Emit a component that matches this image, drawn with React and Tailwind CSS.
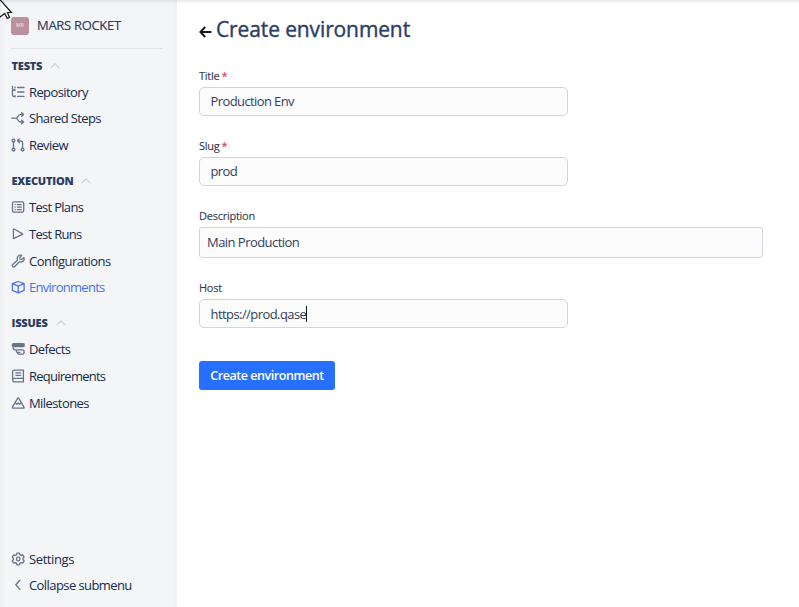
const FONT = "font-['Open_Sans','Noto_Sans',sans-serif]";

function Icon({ children }) {
  return (
    <svg
      width="14"
      height="14"
      viewBox="0 0 14 14"
      fill="none"
      stroke="currentColor"
      strokeWidth="1.3"
      strokeLinecap="round"
      strokeLinejoin="round"
      className="shrink-0"
    >
      {children}
    </svg>
  );
}

const icons = {
  repository: (
    <Icon>
      <path d="M1.5 1.4v8.9a1 1 0 0 0 1 1h1.5M1.5 5h2.5M4 2v.8M6.6 2.5h6.4M6.6 7h6.4M6.6 11.4h6.4M4 4.4v1.2M4 10.7v1.2" />
    </Icon>
  ),
  shared: (
    <Icon>
      <path d="M.8 7.2h4.2M12.4 3.4H9.6C7 3.4 6.6 7.2 5 7.2 6.6 7.2 7 11 9.6 11h2.8M10.6 1.6l2 1.8-2 1.8M10.6 9.2l2 1.8-2 1.8" />
    </Icon>
  ),
  review: (
    <Icon>
      <circle cx="2.5" cy="2.6" r="1.4" />
      <circle cx="2.5" cy="11.6" r="1.4" />
      <circle cx="11.6" cy="11.6" r="1.4" />
      <path d="M2.5 4v6.2M11.6 10.2V5.2c0-1.4-.8-2.4-2.2-2.4H6.6M8.4.9 6.5 2.8l1.9 1.9" />
    </Icon>
  ),
  plans: (
    <Icon>
      <rect x="1.5" y="1.8" width="11.2" height="10.4" rx="1.4" />
      <path d="M4.1 4.6h.2M6.4 4.6h3.9M4.1 7.1h.2M6.4 7.1h3.9M4.1 9.6h.2M6.4 9.6h3.9" />
    </Icon>
  ),
  runs: (
    <Icon>
      <path d="M2.4 2.4v9.2L11.4 7.4a.5.5 0 0 0 0-.8L3 2a.4.4 0 0 0-.6.4z" />
    </Icon>
  ),
  configurations: (
    <Icon>
      <path d="M12.9 3.6 10.8 5.3 9.1 5.1 8.9 3.4 10.7 1.4A3.3 3.3 0 0 0 6.6 6L1.7 10.5a1.3 1.3 0 0 0 2 2L8.4 7.8a3.3 3.3 0 0 0 4.5-4.2z" />
    </Icon>
  ),
  environments: (
    <Icon>
      <path d="M7.2 1.5 13.1 3.6V10.4L7.2 12.9 1.4 10.4V3.6zM1.4 3.6 7.2 6.1l5.9-2.5M7.2 6.1V12.9" />
    </Icon>
  ),
  defects: (
    <Icon>
      <rect x="1.4" y="1.7" width="11.8" height="3" rx="1.1" fill="currentColor" />
      <path d="M2 5.2c.2 1.8 1 2.6 2.6 2.6h.4" />
      <path d="M7.2 7.9h4.2a1.6 1.6 0 0 1 1.7 1.6v1a1.6 1.6 0 0 1-1.7 1.6H8.3c-1.2 0-1.7-.7-1.7-1.7M7.2 7.9H6.4a1.2 1.2 0 0 0 0 2.4h2.4" />
    </Icon>
  ),
  requirements: (
    <Icon>
      <path d="M12.4 9.4V1.2H3.1c-1 0-1.5.6-1.5 1.5v8.4M12.4 9.4H3.2c-2.1 0-2.1 3.4 0 3.4h9.2V9.4M4.9 3.9h4.8M4.9 6.3h4.8" />
    </Icon>
  ),
  milestones: (
    <Icon>
      <path d="M7.2 1.9a.7.7 0 0 1 .6.4l5.2 8.9a.7.7 0 0 1-.6 1H2a.7.7 0 0 1-.6-1l5.2-8.9a.7.7 0 0 1 .6-.4zM4.4 7l1.5 1.3 1.3-1.3 1.3 1.3L10 7" />
    </Icon>
  ),
  settings: (
    <Icon>
      <circle cx="7.2" cy="7" r="1.8" />
      <path d="M5.9 1.2h2.6l.5 1.6 1.2.6 1.6-.4 1.3 2.2L12 6.4v1.2l1.1 1.2-1.3 2.2-1.6-.4-1.2.6-.5 1.6H5.9l-.5-1.6-1.2-.6-1.6.4-1.3-2.2 1.1-1.2V6.4L1.3 5.2 2.6 3l1.6.4 1.2-.6z" />
    </Icon>
  ),
  collapse: (
    <Icon>
      <path d="M8.9 2.2 4.8 6.7l4.1 4.5" />
    </Icon>
  ),
};

const sections = [
  {
    title: "TESTS",
    spacing: "mt-2",
    items: [
      ["repository", "Repository", "tracking-[-0.6px]"],
      ["shared", "Shared Steps", "mt-[8px] tracking-[-0.63px]"],
      ["review", "Review", "mt-[9px] tracking-[-0.6px]"],
    ],
  },
  {
    title: "EXECUTION",
    spacing: "mt-[18px]",
    items: [
      ["plans", "Test Plans", "tracking-[-0.7px]"],
      ["runs", "Test Runs", "mt-[9px] tracking-[-0.7px]"],
      ["configurations", "Configurations", "mt-[9px] tracking-[-0.53px]"],
      ["environments", "Environments", "mt-[8px] tracking-[-0.72px]"],
    ],
  },
  {
    title: "ISSUES",
    spacing: "mt-[18px]",
    items: [
      ["defects", "Defects", "tracking-[-0.6px]"],
      ["requirements", "Requirements", "mt-[9px] tracking-[-0.75px]"],
      ["milestones", "Milestones", "mt-[9px] tracking-[-0.58px]"],
    ],
  },
];

function NavItem({ icon, label, className }) {
  const active = icon === "environments";
  return (
    <a className={`flex h-[18px] items-center gap-[4px] ${className} ${active ? "text-[#4a72f5]" : "text-[#69748a]"}`}>
      {icons[icon]}
      <span className={`whitespace-nowrap text-[13px] leading-[18px] ${active ? "" : "text-[#172b4d]"}`}>{label}</span>
    </a>
  );
}

function Sidebar() {
  return (
    <aside className="flex h-full w-[177px] shrink-0 flex-col bg-[#f3f5f7] pl-[11px] pr-[14px] shadow-[inset_-5px_0_5px_-4px_rgba(0,0,0,0.04),inset_5px_0_5px_-4px_rgba(0,0,0,0.04)]">
      <div className="flex h-[48px] items-center gap-2 pt-[4px]">
        <span className="flex h-[18px] w-[18px] items-center justify-center rounded-[3px] bg-[#b9909c] text-[5px] font-semibold text-[#eadce0]">
          MR
        </span>
        <span className="text-[13px] tracking-[-0.3px] text-[#2b3c61] [-webkit-text-stroke:0.15px]">MARS ROCKET</span>
      </div>
      <div className="h-px shrink-0 bg-[#dfe2e6]" />
      <nav className="flex flex-col">
        {sections.map((s) => (
          <section key={s.title} className={s.spacing}>
            <h2 className="mb-2 flex h-[18px] items-center gap-[8px] pl-[0.5px] text-[11px] font-extrabold leading-[18px] tracking-[-0.2px] text-[#2b3c61]">
              {s.title}
              <svg width="10" height="6" viewBox="0 0 10 6" fill="none" stroke="#cbcfd6" strokeWidth="1.1">
                <path d="M.7 5.2 5 .9l4.3 4.3" />
              </svg>
            </h2>
            {s.items.map(([icon, label, className]) => (
              <NavItem key={icon} icon={icon} label={label} className={className} />
            ))}
          </section>
        ))}
      </nav>
      <div className="mt-auto pb-[13px]">
        <NavItem icon="settings" label="Settings" className="tracking-[-0.4px]" />
        <NavItem icon="collapse" label="Collapse submenu" className="mt-[8px] tracking-[-0.58px]" />
      </div>
    </aside>
  );
}

function Field({ label, required, value, wide, focused, tracking }) {
  return (
    <div>
      <label className="flex h-[15px] items-center gap-[2px] whitespace-nowrap text-[11px] leading-[15px] tracking-[-0.25px] text-[#303a4c] [-webkit-text-stroke:0.1px]">
        {label}
        {required && <span className="text-[#d6336c]">*</span>}
      </label>
      <div
        className={`mt-[4px] flex items-center border border-[#d0d4dc] bg-[#fcfcfc] text-[13px] ${tracking} text-[#303f60] ${
          wide ? "h-[31px] w-[564px] rounded-[3px] pl-[7px]" : "h-[29px] w-[369px] rounded-[5px] pl-[10.5px]"
        }`}
      >
        <span className={focused ? "pt-[2px]" : ""}>{value}</span>
        {focused && <span className="h-[16px] w-px bg-[#101828]" />}
      </div>
    </div>
  );
}

export default function App() {
  return (
    <div className={`relative flex h-[607px] w-[799px] overflow-hidden bg-white ${FONT}`}>
      <Sidebar />
      <main className="flex-1 pl-[21.5px] pt-[14px]">
        <div className="flex h-[30px] items-center gap-[4.5px]">
          <svg width="13" height="12" viewBox="0 0 13 12" fill="none" stroke="#17191e" strokeWidth="1.9" className="mt-[5px]">
            <path d="M12.4 6H1.6M6.2 1 1.4 6l4.8 5" />
          </svg>
          <h1 className="whitespace-nowrap text-[21px] leading-[30px] tracking-[-0.12px] text-[#2d3e63] [-webkit-text-stroke:0.4px]">
            Create environment
          </h1>
        </div>
        <form className="ml-[0.5px] mt-[24px] flex flex-col">
          <Field label="Title" required value="Production Env" tracking="tracking-[-0.6px]" />
          <div className="h-[22px]" />
          <Field label="Slug" required value="prod" tracking="tracking-[-0.6px]" />
          <div className="h-[22px]" />
          <Field label="Description" value="Main Production" wide tracking="tracking-[-0.54px]" />
          <div className="h-[22px]" />
          <Field label="Host" value="https://prod.qase" focused tracking="tracking-[-0.57px]" />
          <button
            type="button"
            className="mt-[33px] h-[29px] w-[136px] whitespace-nowrap rounded-[3px] bg-[#276fff] pt-px text-[12.5px] font-semibold tracking-[-0.45px] text-white"
          >
            Create environment
          </button>
        </form>
      </main>
      <div className="pointer-events-none absolute inset-x-0 top-0 h-[4px] bg-gradient-to-b from-black/8 to-transparent" />
      <svg className="absolute left-0 top-0" width="13" height="20" viewBox="0 0 13 20">
        <path d="M-.5-1 11.4 12.5H7.5L9.5 17.5 7.2 18.5 4.8 13.5-.5 17.5z" fill="#fff" stroke="#14171f" strokeWidth="1.2" />
      </svg>
    </div>
  );
}
